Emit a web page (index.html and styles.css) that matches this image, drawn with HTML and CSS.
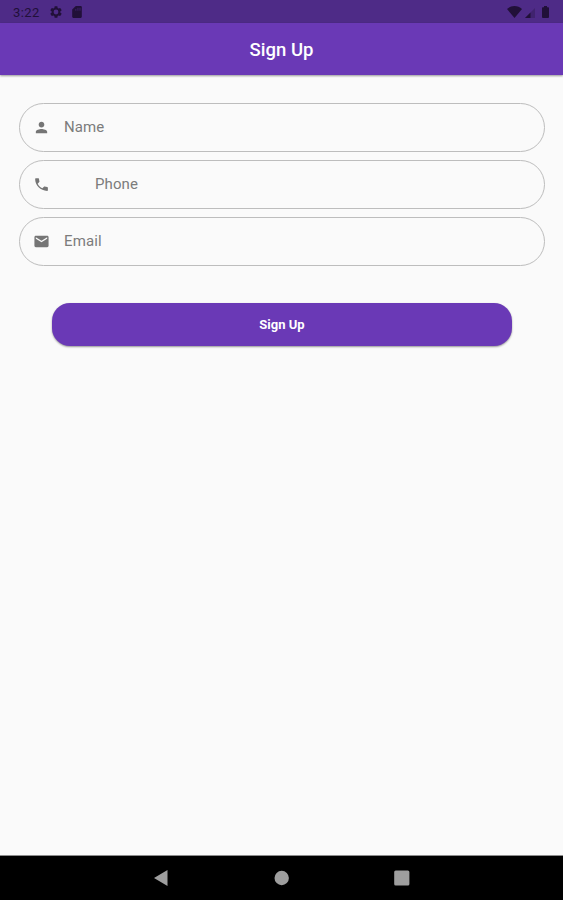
FILE: index.html
```html
<!DOCTYPE html>
<html lang="en">

<head>
    <meta charset="UTF-8">
    <meta name="viewport" content="width=device-width, initial-scale=1.0">
    <title>Sign Up</title>
    <link rel="stylesheet" href="styles.css">
</head>

<body>
    <!-- Status bar -->
    <div class="status-bar">
        <span class="time">3:22</span>
        <svg class="gear" viewBox="2 2 20 20"><path d="M19.14 12.94c.04-.3.06-.61.06-.94 0-.32-.02-.64-.07-.94l2.03-1.58a.49.49 0 0 0 .12-.61l-1.92-3.32a.49.49 0 0 0-.59-.22l-2.39.96c-.5-.38-1.03-.7-1.62-.94l-.36-2.54a.48.48 0 0 0-.48-.41h-3.84a.47.47 0 0 0-.47.41l-.36 2.54c-.59.24-1.13.57-1.62.94l-2.39-.96a.48.48 0 0 0-.59.22L2.74 8.87a.47.47 0 0 0 .12.61l2.03 1.58c-.05.3-.09.63-.09.94s.02.64.07.94l-2.03 1.58a.49.49 0 0 0-.12.61l1.92 3.32c.12.22.37.29.59.22l2.39-.96c.5.38 1.03.7 1.62.94l.36 2.54c.05.24.24.41.48.41h3.84c.24 0 .44-.17.47-.41l.36-2.54c.59-.24 1.13-.56 1.62-.94l2.39.96c.22.08.47 0 .59-.22l1.92-3.32a.47.47 0 0 0-.12-.61l-2.01-1.58zM12 16a4 4 0 1 1 0-8 4 4 0 0 1 0 8z"/></svg>
        <svg class="sd" viewBox="4 2 16 20"><path d="M18 2h-8L4 8v12c0 1.1.9 2 2 2h12c1.1 0 2-.9 2-2V4c0-1.1-.9-2-2-2z"/><path class="sd-pins" d="M9 7h2v3H9zM12.500 5h2v5h-2zM16 5h2v5h-2z"/></svg>
        <div class="status-right">
            <svg class="wifi" viewBox="0 0 15 12"><path d="M7.500 12L0 3C4-1 11-1 15 3z"/></svg>
            <svg class="signal" viewBox="0 0 10 10"><path class="signal-off" d="M0 10L10 0v10z"/><path d="M0 10l5.500-5.500V10z"/></svg>
            <svg class="battery" viewBox="0 0 7 12"><path d="M2 0h3v1.200h1.200q.8 0 .8.800v9q0 1-1 1H1q-1 0-1-1V2q0-.8.8-.8H2z"/></svg>
        </div>
    </div>

    <!-- App bar -->
    <div class="app-bar">
        <h1>Sign Up</h1>
    </div>

    <!-- Sign up form -->
    <form class="signup-form">
        <label class="field">
            <svg viewBox="0 0 24 24"><path d="M12 12c2.210 0 4-1.790 4-4s-1.790-4-4-4-4 1.790-4 4 1.790 4 4 4zm0 2c-2.670 0-8 1.340-8 4v2h16v-2c0-2.660-5.330-4-8-4z"/></svg>
            <input type="text" placeholder="Name">
        </label>
        <label class="field phone">
            <svg viewBox="0 0 24 24"><path d="M6.620 10.790c1.440 2.830 3.760 5.140 6.590 6.590l2.200-2.200c.27-.27.67-.36 1.020-.24 1.120.37 2.330.57 3.570.57.55 0 1 .45 1 1V20c0 .55-.45 1-1 1-9.390 0-17-7.610-17-17 0-.55.45-1 1-1h3.500c.55 0 1 .45 1 1 0 1.250.2 2.450.57 3.570.11.35.03.74-.25 1.020l-2.200 2.200z"/></svg>
            <input type="tel" placeholder="Phone">
        </label>
        <label class="field">
            <svg viewBox="0 0 24 24"><path d="M20 4H4c-1.100 0-1.990.9-1.990 2L2 18c0 1.100.9 2 2 2h16c1.100 0 2-.9 2-2V6c0-1.100-.9-2-2-2zm0 4l-8 5-8-5V6l8 5 8-5v2z"/></svg>
            <input type="email" placeholder="Email">
        </label>
        <button type="button" class="signup-btn">Sign Up</button>
    </form>

    <!-- Navigation bar -->
    <div class="nav-bar">
        <svg viewBox="0 0 16 16"><path d="M0 8l13.500-8v16z"/></svg>
        <svg viewBox="0 0 16 16"><circle cx="7.700" cy="8" r="7.200"/></svg>
        <svg viewBox="0 0 16 16"><rect x=".2" y=".4" width="15.200" height="15.200" rx="1.500"/></svg>
    </div>
</body>

</html>
```

FILE: styles.css
```css
* {
    box-sizing: border-box;
    margin: 0;
    padding: 0;
}

body {
    font-family: Roboto, sans-serif;
    background-color: #fafafa;
    height: 100vh;
    display: flex;
    flex-direction: column;
}

svg {
    display: block;
    flex-shrink: 0;
}

.status-bar {
    height: 23px;
    background-color: #4e2b87;
    color: #211039;
    fill: #211039;
    display: flex;
    align-items: center;
    padding: 1px 13px 0;
}

.time {
    width: 37px;
    font-size: 13px;
    letter-spacing: 0.4px;
}

.gear {
    width: 12px;
    height: 12px;
}

.sd {
    width: 10px;
    height: 12px;
    margin-left: 10px;
}

.sd-pins {
    fill: #4e2b87;
    opacity: 0.5;
}

.status-right {
    display: flex;
    align-items: center;
    margin-left: auto;
}

.wifi {
    width: 15px;
    height: 12px;
}

.signal {
    width: 10px;
    height: 10px;
    margin: 1px 7px 0 3px;
}

.signal-off {
    opacity: 0.3;
}

.battery {
    width: 7px;
    height: 12px;
    margin-right: 1px;
}

.app-bar {
    height: 52px;
    background-color: #6a39b6;
    color: white;
    display: flex;
    align-items: center;
    justify-content: center;
    padding-top: 2px;
    box-shadow: 0 1px 2px rgba(0, 0, 0, 0.4);
}

.app-bar h1 {
    font-size: 18.5px;
    font-weight: 500;
}

.signup-form {
    flex: 1;
    display: flex;
    flex-direction: column;
    gap: 8px;
    padding: 28px 18px 0 19px;
}

.field {
    height: 49px;
    border: 1px solid #bdbdbd;
    border-radius: 25px;
    display: flex;
    align-items: center;
    padding: 0 13px;
}

.field svg {
    width: 17px;
    height: 17px;
    fill: #757575;
}

.field input {
    flex: 1;
    margin-left: 14px;
    padding-bottom: 2px;
    border: none;
    outline: none;
    background: transparent;
    font-family: inherit;
    font-size: 15px;
    letter-spacing: 0.1px;
}

.field input::placeholder {
    color: #7c7c7c;
}

.phone input {
    margin-left: 45px;
}

.signup-btn {
    height: 43px;
    margin: 29px 33px 0;
    border: none;
    border-radius: 18px;
    background-color: #6a39b6;
    color: white;
    font-family: inherit;
    font-size: 13px;
    font-weight: 700;
    box-shadow: 0 1px 2px rgba(0, 0, 0, 0.4);
}

.nav-bar {
    height: 45px;
    background-color: black;
    border-top: 1px solid #8c8c8c;
    display: flex;
    align-items: center;
    justify-content: center;
    gap: 104px;
}

.nav-bar svg {
    width: 16px;
    height: 16px;
    fill: #9e9e9e;
}
```
